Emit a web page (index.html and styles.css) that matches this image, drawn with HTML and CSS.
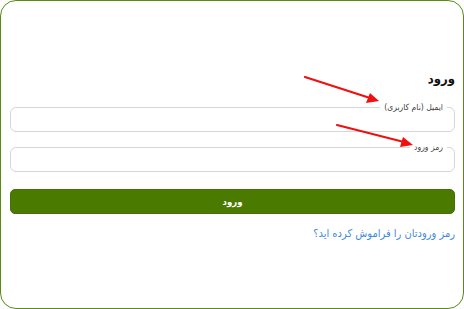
FILE: index.html
```html
<!DOCTYPE html>
<html lang="fa" dir="rtl">

<head>
    <meta charset="UTF-8">
    <meta name="viewport" content="width=device-width, initial-scale=1.0">
    <title>ورود</title>
    <link rel="stylesheet" href="styles.css">
</head>

<body>
    <div class="card">
        <form class="login-form">
            <h2 class="title">ورود</h2>
            <fieldset class="field">
                <legend>ایمیل (نام کاربری)</legend>
                <input type="text" id="username">
            </fieldset>
            <fieldset class="field field-pass">
                <legend>رمز ورود</legend>
                <input type="password" id="password">
            </fieldset>
            <button type="submit" class="submit">ورود</button>
            <a href="#" class="forgot">رمز ورودتان را فراموش کرده اید؟</a>
        </form>

        <!-- red pointers -->
        <svg class="arrows" width="464" height="309" viewBox="0 0 464 309">
            <line x1="305" y1="77" x2="370" y2="98" stroke="#f01010" stroke-width="2.2" stroke-linecap="round" />
            <polygon points="379,101 366,103 370,93" fill="#f01010" />
            <line x1="337" y1="125" x2="404" y2="142" stroke="#f01010" stroke-width="2.2" stroke-linecap="round" />
            <polygon points="413,145 400,147 403,137" fill="#f01010" />
        </svg>
    </div>
</body>

</html>
```

FILE: styles.css
```css
* {
    box-sizing: border-box;
}

body {
    margin: 0;
    font-family: "DejaVu Sans Condensed", "DejaVu Sans", Tahoma, sans-serif;
    background-color: white;
}

.card {
    position: relative;
    width: 464px;
    height: 309px;
    border: 1.5px solid #5b8a14;
    border-radius: 16px;
    padding: 68px 8px 0 9px;
}

.login-form {
    display: flex;
    flex-direction: column;
}

.title {
    margin: 0 0 12px 0;
    font-size: 13px;
    line-height: 20px;
    font-weight: bold;
    color: #111;
}

.field {
    margin: 0;
    padding: 0 6px;
    border: 1.5px solid #d6d6d6;
    border-radius: 6px;
    min-width: 0;
}

.field legend {
    margin-right: 1px;
    padding: 0 4px;
    font-size: 8.5px;
    line-height: 12px;
    color: #444;
}

.field input {
    display: block;
    width: 100%;
    height: 18px;
    border: none;
    outline: none;
    background: transparent;
    font-family: inherit;
}

.field-pass {
    margin-top: 9px;
}

.submit {
    margin-top: 17px;
    height: 25px;
    border: 1px solid #45700a;
    border-radius: 5px;
    background-color: #4a7a00;
    color: white;
    font-family: inherit;
    font-size: 9.5px;
    font-weight: bold;
    cursor: pointer;
}

.forgot {
    margin-top: 11px;
    align-self: flex-start;
    font-size: 11px;
    line-height: 18px;
    color: #3f8ae0;
    text-decoration: none;
}

.arrows {
    position: absolute;
    top: -1.5px;
    left: -1.5px;
    pointer-events: none;
}
```
